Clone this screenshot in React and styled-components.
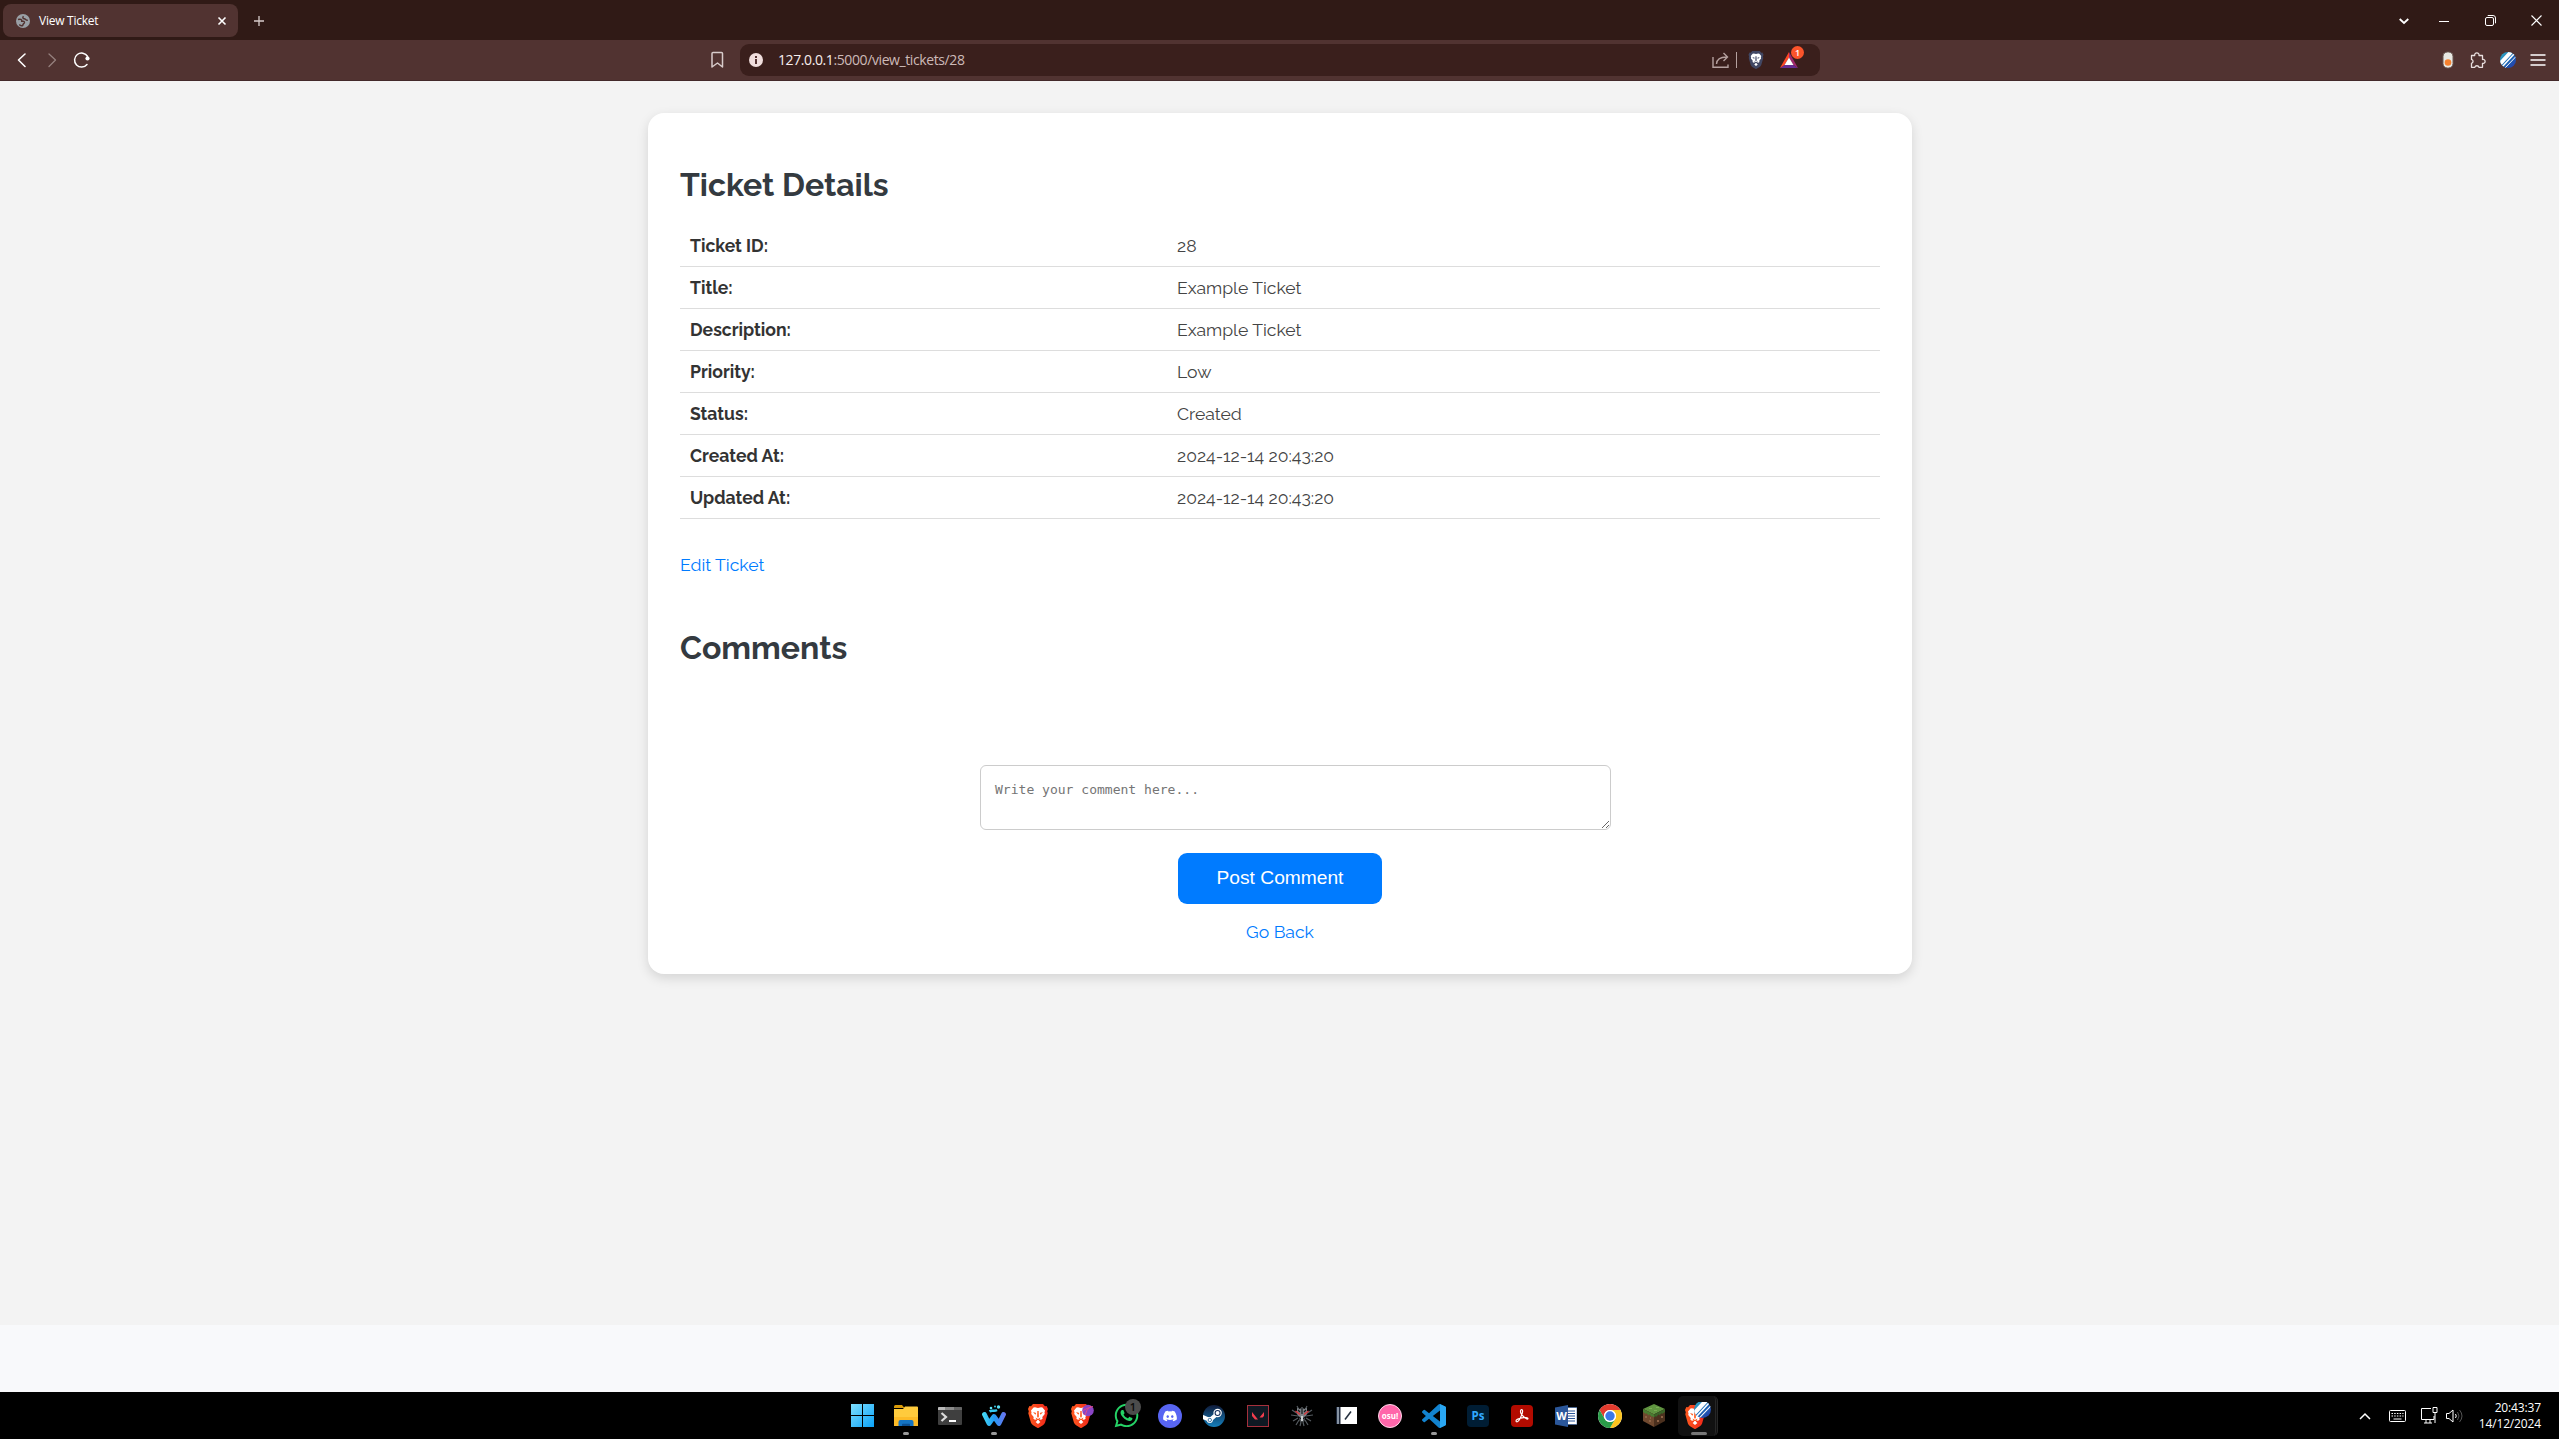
import React from "react";
import styled, { createGlobalStyle } from "styled-components";
import { FaDiscord, FaWhatsapp } from "react-icons/fa";

const Global = createGlobalStyle`
  html, body { margin: 0; padding: 0; background: #f8f9fb; overflow: hidden; }
  *, *::before, *::after { box-sizing: border-box; }
`;

const uiFont = `"Open Sans", "Noto Sans", sans-serif`;
const pageFont = `Raleway, Lato, sans-serif`;

const Window = styled.div`
  width: 2559px;
  height: 1439px;
  display: flex;
  flex-direction: column;
  font-family: ${uiFont};
  svg { display: block; flex: none; }
`;

/* ---------- browser chrome ---------- */
const TabStrip = styled.header`
  height: 40px;
  flex: none;
  background: #301a16;
  display: flex;
  align-items: center;
  padding: 1px 0 0 3px;
  justify-content: space-between;
`;
const TabGroup = styled.div`
  display: flex;
  align-items: center;
  gap: 15px;
`;
const Tab = styled.div`
  width: 235px;
  height: 33px;
  border-radius: 8px;
  background: #513331;
  display: flex;
  align-items: center;
  padding: 0 11px 0 13px;
  color: #fff;
`;
const TabTitle = styled.span`
  flex: 1;
  margin-left: 9px;
  font-size: 12px;
  letter-spacing: -0.26px;
  line-height: 16px;
`;
const WindowButtons = styled.div`
  display: flex;
  align-items: center;
`;
const WindowButton = styled.div`
  width: ${(p) => p.$w || 46}px;
  display: flex;
  justify-content: center;
`;
const Toolbar = styled.nav`
  height: 41px;
  flex: none;
  background: #513331;
  border-bottom: 1px solid #43292a;
  display: flex;
  align-items: center;
  justify-content: space-between;
  padding: 0 10px 0 11px;
`;
const NavButtons = styled.div`
  display: flex;
  align-items: center;
  gap: 8px;
  width: 698px;
`;
const BookmarkSlot = styled.div`
  width: 31px;
  display: flex;
`;
const AddressBar = styled.div`
  width: 1080px;
  height: 32px;
  border-radius: 9px;
  background: #3a1f1c;
  display: flex;
  align-items: center;
  padding: 0 22px 0 9px;
`;
const Url = styled.div`
  flex: 1;
  margin-left: 15px;
  font-size: 14px;
  line-height: 20px;
  letter-spacing: -0.4px;
  color: #cdbab8;
  span { color: #f7eeee; }
`;
const Divider = styled.i`
  width: 1px;
  height: 16px;
  background: #b5a19f;
  margin: 0 11px 0 7px;
`;
const Rewards = styled.div`
  position: relative;
  margin-left: 16px;
`;
const RewardCount = styled.b`
  position: absolute;
  left: 11px;
  top: -6px;
  width: 13px;
  height: 13px;
  border-radius: 50%;
  background: #fb542b;
  color: #fff;
  font-size: 9px;
  line-height: 13px;
  text-align: center;
  font-weight: 600;
`;
const Extensions = styled.div`
  flex: 1;
  display: flex;
  justify-content: flex-end;
  align-items: center;
  gap: 13px;
`;

/* ---------- page ---------- */
const Page = styled.main`
  flex: 1;
  background: linear-gradient(#f3f3f3 1244px, #f8f9fb 1244px);
  padding-top: 32px;
`;
const Card = styled.section`
  width: 1264px;
  height: 861px;
  margin: 0 auto 0 648px;
  padding: 53px 32px 32px;
  border-radius: 16px;
  background: #fff;
  box-shadow: 0 4px 12px rgba(0, 0, 0, 0.13);
  font-family: ${pageFont};
`;
const Heading = styled.h2`
  margin: ${(p) => p.$top || 0}px 0 0;
  font-size: 32px;
  line-height: 38px;
  font-weight: 700;
  color: #343a40;
`;
const Table = styled.dl`
  margin: 21px 0 0;
`;
const Row = styled.div`
  height: 42px;
  border-bottom: 1px solid #ddd;
  display: grid;
  grid-template-columns: 487px 1fr;
  align-items: center;
  font-size: 17.6px;
  line-height: 22px;
`;
const Label = styled.dt`
  padding-left: 10px;
  font-weight: 700;
  color: #333;
`;
const Value = styled.dd`
  margin: 0;
  padding-left: 10px;
  color: #444;
`;
const PageLink = styled.a`
  display: block;
  margin-top: ${(p) => p.$top}px;
  font-size: 17.6px;
  line-height: 22px;
  text-align: ${(p) => (p.$center ? "center" : "left")};
  color: #007bff;
`;
const CommentForm = styled.form`
  width: 600px;
  margin: 98px auto 0;
  display: flex;
  flex-direction: column;
  align-items: center;
`;
const CommentBox = styled.textarea`
  box-sizing: content-box;
  align-self: flex-start;
  width: 600px;
  height: 32px;
  margin: 0;
  padding: 16px 15px 15px 14px;
  border: 1px solid #ccc;
  border-radius: 6px;
  background: #fff;
  font: 13.04px/16px "DejaVu Sans Mono", monospace;
  &::placeholder { color: #757575; }
`;
const PostButton = styled.button`
  width: 204px;
  height: 51px;
  margin-top: 23px;
  padding: 0 0 2px;
  border: 0;
  border-radius: 9px;
  background: #007bff;
  color: #fff;
  font: 19.2px/24px "Liberation Sans", Arial, sans-serif;
`;

/* ---------- taskbar ---------- */
const Taskbar = styled.footer`
  height: 47px;
  flex: none;
  background: #000;
  display: grid;
  grid-template-columns: 840px 1fr auto;
  align-items: center;
`;
const Apps = styled.div`
  grid-column: 2;
  display: flex;
`;
const AppSlot = styled.div`
  position: relative;
  width: 44px;
  height: 47px;
  display: flex;
  align-items: center;
  justify-content: center;
`;
const Running = styled.i`
  position: absolute;
  bottom: 4px;
  left: ${(p) => (p.$wide ? 15 : 19)}px;
  width: ${(p) => (p.$wide ? 16 : 6)}px;
  height: 3px;
  border-radius: 2px;
  background: ${(p) => (p.$wide ? "#777" : "#999")};
`;
const ActiveFrame = styled.div`
  width: 40px;
  height: 40px;
  margin-top: 1px;
  border-radius: 5px;
  background: #111;
  border-right: 3px double #272727;
  display: flex;
  align-items: center;
  justify-content: center;
`;
const Unread = styled.span`
  position: absolute;
  left: 21px;
  top: 7px;
  width: 16px;
  height: 16px;
  border-radius: 50%;
  background: #4c4c4c;
  color: #0a0a0a;
  font-size: 11px;
  font-weight: 600;
  line-height: 16px;
  text-align: center;
`;
const Tile = styled.div`
  width: 22px;
  height: 22px;
  display: flex;
  align-items: center;
  justify-content: center;
  border-radius: 4px;
  background: #001d34;
  color: #31a8ff;
  font-size: 11.5px;
  font-weight: 700;
`;
const Osu = styled.div`
  width: 24px;
  height: 24px;
  border-radius: 50%;
  border: 1px solid #ffd9ea;
  background: #ff66aa;
  color: #fff;
  font-size: 8px;
  font-weight: 700;
  line-height: 21px;
  text-align: center;
`;
const Tray = styled.div`
  display: flex;
  align-items: center;
  padding-right: 18px;
`;
const TraySlot = styled.div`
  margin-right: ${(p) => p.$gap}px;
`;
const Clock = styled.time`
  color: #fff;
  font-size: 12px;
  line-height: 16px;
  letter-spacing: -0.14px;
  text-align: right;
  width: 63px;
  div { white-space: nowrap; }
`;

/* ---------- drawings ---------- */
const Svg = ({ w = 20, h = w, box, children, ...rest }) => (
  <svg width={w} height={h} viewBox={box || `0 0 ${w} ${h}`} fill="none" {...rest}>
    {children}
  </svg>
);

const Lion = ({ id, w = 20, h = 24, a = "#ff5a1f", b = "#f0261a" }) => (
  <Svg w={w} h={h} box="0 0 20 24">
    <defs>
      <linearGradient id={id} x1="0" x2="1">
        <stop offset="0" stopColor={a} />
        <stop offset="1" stopColor={b} />
      </linearGradient>
    </defs>
    <path d="M5 0h10l2 2.3 1.6-.2L20 5l-.8 2.2.5 2-2.6 9.2c-.4 1.2-1.2 2.1-2.2 2.8L10.8 23.7a1.4 1.4 0 0 1-1.6 0L5.1 21.2c-1-.7-1.8-1.6-2.2-2.8L.3 9.2l.5-2L0 5l1.4-2.9 1.6.2z" fill={`url(#${id})`} />
    <path d="M10 4l3-.7 1.5.3L17 6.500l-.5 2 .3 1.500-2.500 3 .3 1.800-1.600 1-1.200-.4-1.200 1.200 1.800 1.400L10 20l-2.400-2 1.800-1.400-1.200-1.200-1.200.4-1.600-1 .3-1.800-2.500-3 .3-1.500-.5-2 2.500-2.900L7 3.300z" fill="#fff" />
    <path d="M5 8l3.200 1-.8 1.700zM15 8l-3.200 1 .8 1.700zM9.300 7h1.400l.2 5.500L10 14l-.9-1.500zM7.500 13.500L10 15l2.500-1.500-1 2.500h-3z" fill={a} />
  </Svg>
);

const Globe = () => (
  <Svg w={14} box="0 0 14 14">
    <circle cx="7" cy="7" r="7" fill="#9aa0a6" />
    <path d="M2 5.500c2.500-1 4 .3 3.800 1.700 1.700-.2 3 .3 2.600 1.600-.4 1-1.500.8-1.600 2.500-.1 1-2.300.5-3.500-.8M7.500 2.200C6.300 3.400 7 4.800 8.300 4.800c1.500 0 1.200 1.700 3.500 1.500" stroke="#513331" strokeWidth="1.500" />
  </Svg>
);

const Stripes = ({ id, w = 16 }) => (
  <Svg w={w} box="0 0 16 16">
    <defs>
      <clipPath id={id}><circle cx="8" cy="8" r="8" /></clipPath>
      <linearGradient id={id + "g"} x1="0" y1="0" x2="1" y2="1">
        <stop offset="0" stopColor="#38b6c9" />
        <stop offset=".5" stopColor="#1767b4" />
        <stop offset="1" stopColor="#2b36a8" />
      </linearGradient>
    </defs>
    <g clipPath={`url(#${id})`}>
      <rect width="16" height="16" fill={`url(#${id}g)`} />
      <path d="M-1 13L12-1" stroke="#fff" strokeWidth="4" />
      <path d="M2 15L15 1" stroke="#fff" strokeWidth="1.500" />
      <path d="M4 17L17 3.500" stroke="#fff" strokeWidth="1" />
    </g>
  </Svg>
);

const VsCode = () => (
  <Svg w={24} box="0 0 24 24">
    <path fill="#1283cf" d="M23.15 2.587L18.21.21a1.494 1.494 0 0 0-1.705.29l-9.46 8.63-4.12-3.128a.999.999 0 0 0-1.276.057L.327 7.261A1 1 0 0 0 .326 8.74L3.899 12 .326 15.26a1 1 0 0 0 .001 1.479L1.65 17.94a.999.999 0 0 0 1.276.057l4.12-3.128 9.46 8.63a1.492 1.492 0 0 0 1.704.29l4.942-2.377A1.5 1.5 0 0 0 24 20.06V3.939a1.5 1.5 0 0 0-.85-1.352zm-5.146 14.861L10.826 12l7.178-5.448v10.896z" />
    <path fill="#2aa7f3" d="M18 .1l5.200 2.500a1.500 1.500 0 0 1 .8 1.400v16a1.500 1.500 0 0 1-.8 1.400L18 23.900z" />
  </Svg>
);

const Discord = () => (
  <Svg w={24}>
    <circle cx="12" cy="12" r="12" fill="#5865f2" />
    <svg x="4.5" y="4.5" width="15" height="15"><FaDiscord size={15} color="#fff" /></svg>
  </Svg>
);

const Word = () => (
  <Svg w={22} h={22}>
    <rect x="11" y="2.5" width="11" height="17" fill="#fff" stroke="#2b579a" strokeWidth=".6" />
    <path d="M13 6h7M13 8.500h7M13 11h7M13 13.500h7M13 16h7" stroke="#2b579a" strokeWidth="1.200" />
    <path d="M0 2.500L13 0v22L0 19.500z" fill="#2b579a" />
    <text x="6.5" y="15" fontSize="11" fontWeight="700" textAnchor="middle" fill="#fff">W</text>
  </Svg>
);

/* ---------- taskbar apps ---------- */
const apps = [
  { id: "start", icon: (
    <Svg w={23}>
      <defs><linearGradient id="win" x1="0" y1="0" x2="1" y2="1"><stop offset="0" stopColor="#7fe0ff" /><stop offset="1" stopColor="#0aa2f8" /></linearGradient></defs>
      <path fill="url(#win)" d="M0 0h11v11H0zM12 0h11v11H12zM0 12h11v11H0zM12 12h11v11H12z" />
    </Svg>) },
  { id: "files", run: true, icon: (
    <Svg w={24} h={22}>
      <path d="M0 1.500Q0 0 1.500 0H8l2.500 3H0z" fill="#d99a09" />
      <path d="M0 4h9l2-2.500h12q1 0 1 1V21H0z" fill="#ffcb3d" />
      <path d="M0 12h24v9H0z" fill="#fdbb27" />
      <path d="M4.500 21v-4q0-2 2-2h11q2 0 2 2v4z" fill="#1474c4" />
      <path d="M8 21v-1.500q0-.8.8-.8h6.400q.8 0 .8.800V21z" fill="#0b4f92" />
    </Svg>) },
  { id: "terminal", icon: (
    <Svg w={24} h={18}>
      <rect width="24" height="18" rx="1" fill="#3f3f3f" />
      <path d="M0 3V1q0-1 1-1h6v3z" fill="#b9b9b9" /><path d="M7 0h9v3H7z" fill="#8b8b8b" /><path d="M16 0h7q1 0 1 1v2h-8z" fill="#666" />
      <path d="M3.500 6l4.500 4-4.500 4" stroke="#ddd" strokeWidth="2.200" /><path d="M11 14h7" stroke="#fff" strokeWidth="2" />
    </Svg>) },
  { id: "wave", run: true, icon: (
    <Svg w={24} h={22}>
      <defs><linearGradient id="wv" x1="0" x2="24" y1="0" y2="0" gradientUnits="userSpaceOnUse"><stop offset="0" stopColor="#48dff5" /><stop offset=".5" stopColor="#219cf5" /><stop offset="1" stopColor="#6f71ed" /></linearGradient></defs>
      <path d="M2.500 9.500L7 18.500 12 11.500l5 7 4.500-9" stroke="url(#wv)" strokeWidth="4.800" strokeLinecap="round" strokeLinejoin="round" />
      <path d="M7.500 6.500C10 4.500 12 7 15 5" stroke="#35c9f2" strokeWidth="2.400" />
      <circle cx="9" cy="3" r="1.300" fill="#5fe3f7" /><circle cx="13" cy="1.500" r="1" fill="#37c8e8" /><circle cx="16.500" cy="2" r="1.700" fill="#58dff5" />
    </Svg>) },
  { id: "brave", icon: <Lion id="b1" /> },
  { id: "brave2", icon: (
    <Svg w={24} h={24}>
      <svg x="1" y="0" width="20" height="24"><Lion id="b2" /></svg>
      <circle cx="18" cy="6.500" r="5.800" fill="#8a45c6" /><path d="M13 6.500q5-3 10-4M15 11q1-5 6-9" stroke="#e04a8c" strokeWidth="1" />
    </Svg>) },
  { id: "whatsapp", icon: <FaWhatsapp size={27} color="#25d366" />, badge: "1" },
  { id: "discord", icon: <Discord /> },
  { id: "steam", icon: (
    <Svg w={22}>
      <defs><linearGradient id="st" x1="0" y1="0" x2="0" y2="1"><stop offset="0" stopColor="#101b3a" /><stop offset="1" stopColor="#1580bd" /></linearGradient></defs>
      <circle cx="11" cy="11" r="11" fill="url(#st)" />
      <path d="M0 12l7 3M7 15l8-7" stroke="#fff" strokeWidth="4" strokeLinecap="round" />
      <circle cx="14.600" cy="8" r="4.200" fill="#fff" /><circle cx="14.600" cy="8" r="2.500" stroke="#15305c" strokeWidth="1.100" />
      <circle cx="6.800" cy="15" r="3" fill="#fff" /><circle cx="6.800" cy="15" r="1.700" stroke="#1b5a92" strokeWidth=".8" />
    </Svg>) },
  { id: "valorant", icon: (
    <Svg w={22}>
      <rect x=".5" y=".5" width="21" height="21" fill="#0f1923" stroke="#a5303c" />
      <path d="M5 7l6 7.500H8L5 11zM17 7l-4.500 5.500h3L17 11z" fill="#f23d4e" />
    </Svg>) },
  { id: "witcher", icon: (
    <Svg w={22}>
      <path d="M1 5l6 4M0 10l7 1M2 16l5-3M5 20l3-5M9 21l1-4M21 5l-6 4M22 10l-7 1M20 16l-5-3M17 20l-3-5M13 21l-1-4M6 1l2 4M16 1l-2 4" stroke="#555b60" strokeWidth="1.200" />
      <path d="M6 3l3 1 2-2 2 2 3-1v6l-2 3-1 5h-4l-1-5-2-3z" fill="#7d8287" />
      <path d="M11 3v6M8 12l3 3 3-3M9 16h4M7 5l2 2M15 5l-2 2" stroke="#15181a" strokeWidth="1.200" />
      <path d="M4.500 6l4.500 3.500M17.500 6L13 9.500" stroke="#d8343a" strokeWidth="1.400" />
      <path d="M10 11h2v5h-2z" fill="#c9cdd0" />
    </Svg>) },
  { id: "notes", icon: (
    <Svg w={21} h={17}>
      <rect width="21" height="17" fill="#fff" /><path d="M0 0h1v17H0zM3 0h1.500v17H3z" fill="#1e293b" /><path d="M1 0h2v17H1z" fill="#8793a3" />
      <path d="M9 12.500l6-8" stroke="#26313f" strokeWidth="1.600" />
    </Svg>) },
  { id: "osu", icon: <Osu>osu!</Osu> },
  { id: "code", run: true, icon: <VsCode /> },
  { id: "ps", icon: <Tile>Ps</Tile> },
  { id: "acrobat", icon: (
    <Svg w={22}>
      <rect width="22" height="22" rx="4" fill="#b30b00" />
      <path d="M5 16c0-2.300 12-5 12-2.500 0 2.300-7.500-3.300-7.500-7 0-2.700 2.300-2.500 2.100 0C11.400 9.500 8 16.800 6 16.800c-.6 0-1-.3-1-.8z" stroke="#fff" strokeWidth="1.200" />
    </Svg>) },
  { id: "word", icon: <Word /> },
  { id: "chrome", icon: (
    <Svg w={24} box="-12 -12 24 24">
      <circle r="12" fill="#fff" />
      <path d="M-10.390-6A12 12 0 0 1 10.390-6H0A6 6 0 0 0-5.200 3z" fill="#e33b2e" />
      <path d="M10.390-6A12 12 0 0 1 0 12L5.200 3A6 6 0 0 0 0-6z" fill="#fcc31e" />
      <path d="M0 12A12 12 0 0 1-10.390-6L-5.200 3A6 6 0 0 0 5.200 3z" fill="#2a9c48" />
      <circle r="6" fill="#fff" /><circle r="4.700" fill="#3b78e7" />
    </Svg>) },
  { id: "minecraft", icon: (
    <Svg w={22} h={23}>
      <path d="M11 0l11 5-11 5.500L0 5z" fill="#5f9440" /><path d="M0 5l11 5.500V23L0 17z" fill="#70492f" /><path d="M22 5l-11 5.500V23l11-6z" fill="#4b301e" />
      <path d="M0 5l11 5.500v3L9 12v1L6 10v1.500L3 9v1L0 8z" fill="#4a7d32" /><path d="M22 5l-11 5.500v3l2-1.500v1l3-3v1.500l3-2.500v1l3-2z" fill="#3a6428" />
      <path d="M2 12h2v2H2zM6 16h2v2H6zM7 13h1v2H7zM14 16h2v2h-2zM18 12h2v2h-2z" fill="#8c6246" />
      <path d="M6 4h3v1H6zM11 6h3v1h-3zM13 3h3v1h-3z" fill="#78ad52" />
    </Svg>) },
  { id: "active", wide: true, icon: (
    <ActiveFrame>
      <Svg w={28} h={28}>
        <svg x="2" y="3" width="20" height="24"><Lion id="b3" /></svg>
        <svg x="11" y="-1" width="17" height="17"><Stripes id="s2" w={17} /></svg>
      </Svg>
    </ActiveFrame>) },
];

const rows = [
  { label: "Ticket ID:", value: "28" },
  { label: "Title:", value: "Example Ticket" },
  { label: "Description:", value: "Example Ticket" },
  { label: "Priority:", value: "Low" },
  { label: "Status:", value: "Created" },
  { label: "Created At:", value: "2024-12-14 20:43:20" },
  { label: "Updated At:", value: "2024-12-14 20:43:20" },
];

const line = { stroke: "#fff", strokeWidth: 1.3, strokeLinecap: "round", strokeLinejoin: "round" };

export default function App() {
  return (
    <Window>
      <Global />
      <TabStrip>
        <TabGroup>
          <Tab>
            <Globe />
            <TabTitle>View Ticket</TabTitle>
            <Svg w={10} stroke="#fff" strokeWidth="1.6"><path d="M1.500 1.500l7 7M8.500 1.500l-7 7" /></Svg>
          </Tab>
          <Svg w={12} stroke="#d8cccb" strokeWidth="1.3"><path d="M6 1v10M1 6h10" /></Svg>
        </TabGroup>
        <WindowButtons>
          <WindowButton $w={34}><Svg w={10} h={10} stroke="#fff" strokeWidth="1.8"><path d="M.7 3L5 7l4.300-4" /></Svg></WindowButton>
          <WindowButton><Svg w={10} h={10} stroke="#fff"><path d="M0 5.500h10" /></Svg></WindowButton>
          <WindowButton><Svg w={11} stroke="#fff"><rect x=".5" y="2.5" width="8" height="8" rx="1.5" /><path d="M2.700.5h5.300a2.500 2.500 0 0 1 2.500 2.500v5.300" /></Svg></WindowButton>
          <WindowButton><Svg w={11} stroke="#fff" strokeWidth="1.1"><path d="M.5.500l10 10M10.500.500l-10 10" /></Svg></WindowButton>
        </WindowButtons>
      </TabStrip>

      <Toolbar>
        <NavButtons>
          <Svg w={22} h={20}><path d="M14 4l-6.500 6 6.500 6.500" {...line} strokeWidth="1.6" /></Svg>
          <Svg w={22} h={20}><path d="M8 4l6.500 6L8 16.500" {...line} stroke="#95807e" /></Svg>
          <Svg w={20} h={20}><path d="M16.600 6.500A7 7 0 1 0 16 14.500" {...line} strokeWidth="1.5" /><circle cx="16.500" cy="8.500" r="2.100" fill="#fff" /></Svg>
        </NavButtons>
        <BookmarkSlot>
          <Svg w={18}><path d="M4 1.500h8.500a1 1 0 0 1 1 1v13.500L8.500 12 3 16V2.500a1 1 0 0 1 1-1z" {...line} stroke="#d8cccb" strokeWidth="1.5" /></Svg>
        </BookmarkSlot>
        <AddressBar>
          <Svg w={14}><circle cx="7" cy="7" r="7" fill="#f0dedd" /><path d="M6 6h2v5H6zM6 3h2v2H6z" fill="#533" /></Svg>
          <Url><span>127.0.0.1</span>:5000/view_tickets/28</Url>
          <Svg w={17} h={17} stroke="#b5a19f" strokeWidth="1.4"><path d="M1 5v10.300h15V12.500M4.500 12C4.800 7.500 8 5 14.500 5M11.500 1L15.500 5l-4 4" /></Svg>
          <Divider />
          <Lion id="shield" w={16} h={18} a="#414763" b="#414763" />
          <Rewards>
            <Svg w={18} h={16}><path d="M0 16h18l-4.500-3h-9z" fill="#662d91" /><path d="M9 0l9 16-4.500-3L9 5.500z" fill="#a0286c" /><path d="M9 0L0 16l4.500-3L9 5.500z" fill="#ff4724" /><path d="M9 5.500l4.500 7.500h-9z" fill="#fff" /></Svg>
            <RewardCount>1</RewardCount>
          </Rewards>
        </AddressBar>
        <Extensions>
          <Svg w={12} h={18} style={{ marginRight: 2 }}><rect x="1" y="1" width="10" height="16" rx="4.5" fill="#e8e8e3" stroke="#6b5b55" /><circle cx="6" cy="11.5" r="3.3" fill="#f5812f" /></Svg>
          <Svg w={18} h={18}><path d="M2.500 4.500h3.200a2.200 2.200 0 1 1 4.300 0H13.500v4a2 2 0 1 1 0 3.800v4H10a2.200 2.200 0 0 0-4.200 0H2.500v-4a2 2 0 0 0 0-3.900z" {...line} stroke="#e8dfde" /></Svg>
          <Stripes id="s1" />
          <Svg w={16} h={14} stroke="#fff" strokeWidth="1.3" style={{ marginLeft: 1, marginRight: 3 }}><path d="M.5 2h15M.5 7h15M.5 12h15" /></Svg>
        </Extensions>
      </Toolbar>

      <Page>
        <Card>
          <Heading>Ticket Details</Heading>
          <Table>
            {rows.map((r) => (
              <Row key={r.label}>
                <Label>{r.label}</Label>
                <Value>{r.value}</Value>
              </Row>
            ))}
          </Table>
          <PageLink $top={35}>Edit Ticket</PageLink>
          <Heading $top={53}>Comments</Heading>
          <CommentForm>
            <CommentBox placeholder="Write your comment here..." />
            <PostButton type="button">Post Comment</PostButton>
          </CommentForm>
          <PageLink $top={17} $center>Go Back</PageLink>
        </Card>
      </Page>

      <Taskbar>
        <Apps>
          {apps.map((a) => (
            <AppSlot key={a.id}>
              {a.icon}
              {a.badge && <Unread>{a.badge}</Unread>}
              {(a.run || a.wide) && <Running $wide={a.wide} />}
            </AppSlot>
          ))}
        </Apps>
        <Tray>
          <TraySlot $gap={18}><Svg w={12} h={10} stroke="#fff" strokeWidth="1.5"><path d="M1 8l5-5 5 5" /></Svg></TraySlot>
          <TraySlot $gap={15}><Svg w={17} h={12} stroke="#fff"><rect x=".5" y=".5" width="16" height="11" rx="1" /><path d="M2.500 3.500h12M2.500 6h12" strokeDasharray="1.5 1.2" /><path d="M4.500 9h8" /></Svg></TraySlot>
          <TraySlot $gap={8}><Svg w={17} h={17} stroke="#fff"><path d="M10 1.500H.5v11H13V9M3 16h8M5 13v3M9 13v3M12 .5h4v5h-4zM14 5.500V16" /></Svg></TraySlot>
          <TraySlot $gap={15}><Svg w={17} h={14} stroke="#fff"><path d="M.5 4.500H3L7 1v12L3 9.500H.5z" /><path d="M9.500 5q1.500 2 0 4" /><path d="M11.500 3q3 4 0 8M13.500 1q5 6 0 12" stroke="#555" /></Svg></TraySlot>
          <Clock><div>20:43:37</div><div>14/12/2024</div></Clock>
        </Tray>
      </Taskbar>
    </Window>
  );
}
